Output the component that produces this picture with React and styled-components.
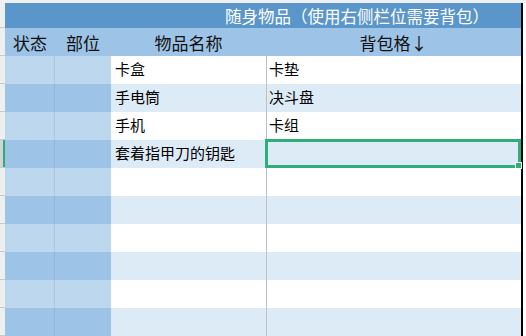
import React from "react";
import styled, { createGlobalStyle, css } from "styled-components";

const GlobalStyle = createGlobalStyle`
  html, body { margin: 0; padding: 0; background: #ffffff; }
  body {
    font-family: "Noto Sans CJK SC", "Noto Sans", "Liberation Sans", sans-serif;
    color: #000;
  }
`;

const COLS = "5px 50px 56px 155px 255px 2px 3px";

const Sheet = styled.div`
  width: 526px;
  height: 336px;
  overflow: hidden;
  display: flex;
  flex-direction: column;
  background: #fff;
`;

const TopStrip = styled.div`
  height: 3px;
  flex: none;
  background: #eff0f2;
`;

const Row = styled.div`
  display: grid;
  grid-template-columns: ${COLS};
  height: ${(p) => p.$h}px;
  flex: none;
`;

const RowHeader = styled.div`
  box-sizing: border-box;
  background: ${(p) => (p.$active ? "#d3d4d6" : "#eeeff1")};
  border-bottom: 1px solid #c9cacc;
  ${(p) =>
    p.$active &&
    css`
      box-shadow: inset -2px 0 0 #2eaa78;
    `}
`;

const Title = styled.div`
  grid-column: span 4;
  background: #5b96ca;
  color: #ffffff;
  font-size: 16.5px;
  display: flex;
  align-items: center;
  justify-content: flex-end;
  padding-right: 32px;
  white-space: nowrap;
`;

const HeadCell = styled.div`
  background: #9dc3e6;
  font-size: 17px;
  color: #111;
  display: flex;
  align-items: center;
  justify-content: center;
  white-space: nowrap;
`;

const SideCell = styled.div`
  box-sizing: border-box;
  background: ${(p) => (p.$dark ? "#9dc3e6" : "#bdd7ee")};
  ${(p) =>
    p.$divider &&
    css`
      border-right: 1px solid rgba(110, 135, 160, 0.22);
    `}
`;

const DataCell = styled.div`
  position: relative;
  box-sizing: border-box;
  background: ${(p) => (p.$stripe ? "#ddebf7" : "#ffffff")};
  font-size: 15px;
  color: #000;
  display: flex;
  align-items: center;
  padding: 0 0 4px ${(p) => (p.$grid ? "2px" : "4px")};
  white-space: nowrap;
  ${(p) =>
    p.$grid &&
    css`
      border-left: 1px solid #c0c0c0;
    `}
`;

const Selection = styled.div`
  position: absolute;
  left: -2px;
  top: -1px;
  right: 0;
  bottom: 0;
  border: 3px solid #2fae7c;
  pointer-events: none;
`;

const FillHandle = styled.div`
  position: absolute;
  right: -4px;
  bottom: -4px;
  width: 5px;
  height: 5px;
  background: #2fae7c;
  border: 1px solid #fff;
`;

const Edge = styled.div`
  background: #000;
`;

const Margin = styled.div`
  background: #ffffff;
`;

const items = [
  { name: "卡盒", bag: "卡垫" },
  { name: "手电筒", bag: "决斗盘" },
  { name: "手机", bag: "卡组" },
  { name: "套着指甲刀的钥匙", bag: "", selected: true },
  { name: "", bag: "" },
  { name: "", bag: "" },
  { name: "", bag: "" },
  { name: "", bag: "" },
  { name: "", bag: "" },
  { name: "", bag: "" },
];

export default function App() {
  return (
    <>
      <GlobalStyle />
      <Sheet>
        <TopStrip />
        <Row $h={25}>
          <RowHeader />
          <Title>随身物品（使用右侧栏位需要背包）</Title>
          <Edge />
          <Margin />
        </Row>
        <Row $h={28}>
          <RowHeader />
          <HeadCell>状态</HeadCell>
          <HeadCell>部位</HeadCell>
          <HeadCell>物品名称</HeadCell>
          <HeadCell>背包格↓</HeadCell>
          <Edge />
          <Margin />
        </Row>
        {items.map((it, i) => {
          const stripe = i % 2 === 1;
          return (
            <Row $h={28} key={i}>
              <RowHeader $active={it.selected} />
              <SideCell $dark={stripe} $divider />
              <SideCell $dark={stripe} />
              <DataCell $stripe={stripe}>{it.name}</DataCell>
              <DataCell $stripe={stripe} $grid>
                {it.bag}
                {it.selected && (
                  <Selection>
                    <FillHandle />
                  </Selection>
                )}
              </DataCell>
              <Edge />
              <Margin />
            </Row>
          );
        })}
      </Sheet>
    </>
  );
}
